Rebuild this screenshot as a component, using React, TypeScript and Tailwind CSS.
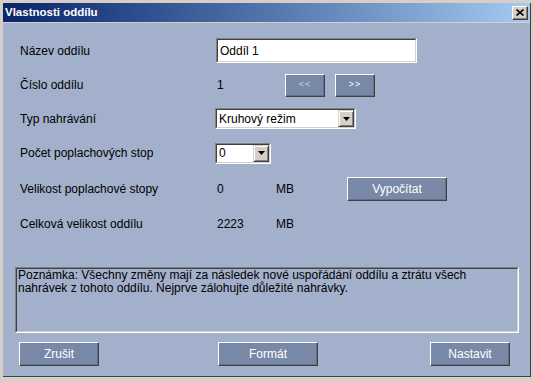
import React from "react";

function BlueButton({ className, children }: { className: string; children: React.ReactNode }) {
  return (
    <div
      className={`${className} flex items-center justify-center bg-[#7889a8] text-white text-[12px] border border-t-white border-l-white border-r-[#404040] border-b-[#404040] shadow-[inset_-1px_-1px_0_#5f6f8c]`}
    >
      {children}
    </div>
  );
}

function Arrow() {
  return (
    <div className="w-[16px] h-full bg-[#d4d0c8] flex items-center justify-center border border-t-[#d4d0c8] border-l-[#d4d0c8] border-r-[#404040] border-b-[#404040] shadow-[inset_1px_1px_0_#ffffff,inset_-1px_-1px_0_#808080]">
      <svg width="7" height="4" viewBox="0 0 7 4">
        <path d="M0 0H7L3.5 4Z" fill="#000" />
      </svg>
    </div>
  );
}

function Select({ className, value }: { className: string; value: string }) {
  return (
    <div className={`${className} h-[21px] border border-t-[#808080] border-l-[#808080] border-b-white border-r-white`}>
      <div className="h-full flex items-center bg-white border border-t-[#404040] border-l-[#404040] border-b-[#d4d0c8] border-r-[#d4d0c8]">
        <span className="flex-1 pl-[2px] text-[12px] text-black leading-none">{value}</span>
        <Arrow />
      </div>
    </div>
  );
}

export default function App() {
  return (
    <div className="w-[533px] h-[382px] bg-[#d4d0c8] pt-[3px] pl-[3px] pr-[2px] pb-[5px] font-['Liberation_Sans',Arial,sans-serif] text-black">
      <div className="h-full flex flex-col border-r border-b border-[#404040]">
        <div className="h-[19px] shrink-0 flex items-center justify-between pl-[2px] pr-[2px] bg-linear-to-r from-[#0a246a] to-[#a6caf0]">
          <span className="text-white font-bold text-[11.5px] leading-none">Vlastnosti oddílu</span>
          <div className="w-[16px] h-[14px] bg-[#d4d0c8] flex items-center justify-center border border-t-white border-l-white border-r-[#404040] border-b-[#404040] shadow-[inset_-1px_-1px_0_#808080]">
            <svg width="8" height="7" viewBox="0 0 8 7">
              <path d="M0.5 0.5L7.5 6.5M7.5 0.5L0.5 6.5" stroke="#000" strokeWidth="1.6" />
            </svg>
          </div>
        </div>
        <div className="flex-1 mt-[1px] bg-[#a2b0cb] pt-[10px] px-[12px] text-[12px]">
          <div className="pl-[5px] flex flex-col">
            <div className="h-[35px] flex items-center">
              <span className="w-[195px]">Název oddílu</span>
              <div className="ml-[1px] w-[201px] h-[25px] border border-t-[#808080] border-l-[#808080] border-b-white border-r-white">
                <div className="h-full flex items-center pl-[2px] bg-white border border-t-[#404040] border-l-[#404040] border-b-[#d4d0c8] border-r-[#d4d0c8]">
                  Oddíl 1
                </div>
              </div>
            </div>
            <div className="h-[34px] flex items-center">
              <span className="w-[195px]">Číslo oddílu</span>
              <span className="w-[70px] pl-[2px]">1</span>
              <div className="flex gap-[10px]">
                <BlueButton className="w-[40px] h-[23px]">
                  <span className="text-[9px] opacity-60 tracking-[1px]">&lt;&lt;</span>
                </BlueButton>
                <BlueButton className="w-[40px] h-[23px]">
                  <span className="text-[9px] tracking-[1px]">&gt;&gt;</span>
                </BlueButton>
              </div>
            </div>
            <div className="h-[33px] flex items-center">
              <span className="w-[195px]">Typ nahrávání</span>
              <Select className="w-[141px]" value="Kruhový režim" />
            </div>
            <div className="h-[36px] flex items-center">
              <span className="w-[195px]">Počet poplachových stop</span>
              <Select className="w-[56px]" value="0" />
            </div>
            <div className="h-[35px] flex items-center">
              <span className="w-[195px]">Velikost poplachové stopy</span>
              <span className="w-[61px] pl-[2px]">0</span>
              <span className="w-[71px]">MB</span>
              <BlueButton className="w-[100px] h-[24px]">Vypočítat</BlueButton>
            </div>
            <div className="h-[35px] flex items-center">
              <span className="w-[195px]">Celková velikost oddílu</span>
              <span className="w-[61px] pl-[2px]">2223</span>
              <span className="w-[71px]">MB</span>
            </div>
          </div>
          <div className="mt-[26px] w-[504px] h-[66px] border border-t-[#808080] border-l-[#808080] border-b-white border-r-white">
            <div className="h-full pl-[1px] leading-[13px] border border-t-[#404040] border-l-[#404040] border-b-[#d4d0c8] border-r-[#d4d0c8]">
              Poznámka: Všechny změny mají za následek nové uspořádání oddílu a ztrátu všech
              <br />
              nahrávek z tohoto oddílu. Nejprve zálohujte důležité nahrávky.
            </div>
          </div>
          <div className="mt-[9px] flex">
            <BlueButton className="ml-[4px] w-[80px] h-[24px]">Zrušit</BlueButton>
            <BlueButton className="ml-[119px] w-[100px] h-[24px]">Formát</BlueButton>
            <BlueButton className="ml-[112px] w-[80px] h-[24px]">Nastavit</BlueButton>
          </div>
        </div>
      </div>
    </div>
  );
}
